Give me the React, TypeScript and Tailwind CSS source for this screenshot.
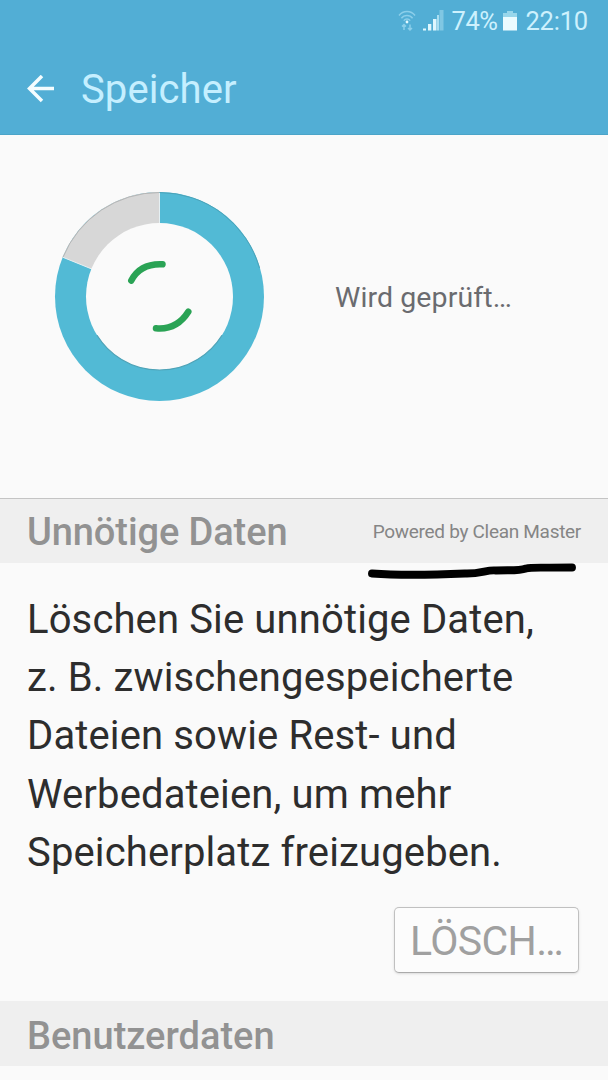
import React from 'react';

const StatusBar: React.FC = () => (
  <div className="flex h-[42px] items-center justify-end pr-5 text-[25.5px] leading-none text-[#cdf1fd]">
    <svg className="mr-[7px]" width="18" height="22" viewBox="0 0 18 22" fill="none">
      <g stroke="#8ccfea" strokeWidth="1.5">
        <path d="M1 5.5C5 .2 13 .2 17 5.5" />
        <path d="M3.4 8.2C6.2 4.6 11.8 4.6 14.6 8.2" />
        <path d="M5.8 10.6C7.4 8.6 10.6 8.6 12.2 10.6" />
        <path d="M6 20v-5M4 16.5l2-2 2 2M12 14.5v5M10 18l2 2 2-2" />
      </g>
      <circle cx="9" cy="12" r="1.4" fill="#e6faff" />
    </svg>
    <svg className="mr-[7px]" width="21" height="22" viewBox="0 0 21 22" fill="#dff7fe">
      <rect x="0" y="18.5" width="3" height="2" />
      <rect x="5" y="14" width="3.3" height="6.5" />
      <rect x="10" y="9" width="3.5" height="11.5" />
      <rect x="14" y="5" width="2" height="15.5" fill="#aadff2" />
      <rect x="16.5" y="0" width="4" height="20.5" fill="#80c7e3" />
    </svg>
    <span className="w-[46px] whitespace-nowrap pt-[2px] tracking-[-0.4px]">74%</span>
    <svg className="ml-[6px] mr-[8px]" width="14" height="22" viewBox="0 0 14 22">
      <path d="M4 1h6v2h4v4H0V3h4z" fill="#98d6eb" />
      <path d="M0 7h14v13.5H0z" fill="#ebfbff" />
    </svg>
    <span className="pt-[2px] tracking-[-0.2px]">22:10</span>
  </div>
);

const StorageRing: React.FC = () => (
  <svg width="212" height="212" viewBox="0 0 212 212" fill="none">
    <circle cx="105.5" cy="105.5" r="104.5" fill="#52bad5" />
    <path d="M105.5 105.5V1A104.5 104.5 0 0 0 8.7 66.2z" fill="#d7d7d7" />
    <path d="M105.5 105.5V1M105.5 105.5L8.7 66.2" stroke="#e6f0f3" strokeWidth="1" />
    <path d="M9 66.2A104 104 0 0 1 105.5 1.5" stroke="#b5b5b5" strokeWidth="1" />
    <path d="M105.5 1.5A104 104 0 0 1 205.5 77" stroke="#4aa3b9" strokeWidth="1" />
    <circle cx="105.5" cy="105.5" r="73.5" fill="#fafafa" />
    <path d="M43 144.2A73.5 73.5 0 0 0 168 144.2" stroke="#4fa3b7" strokeWidth="1.2" />
    <g stroke="#2aa355" strokeWidth="6.5" strokeLinecap="round">
      <path d="M77.3 89.5C83 78.5 92.5 72.5 108.5 73.3" />
      <path d="M102 137.2C115.5 138.5 126.5 133 134.3 120.7" />
    </g>
  </svg>
);

const App: React.FC = () => {
  return (
    <div className="h-[1080px] w-[608px] overflow-hidden bg-[#fafafa] font-[Roboto,sans-serif]">
      <header className="h-[135px] border-b border-[#4ba4c8] bg-[#52aed5]">
        <StatusBar />
        <div className="flex h-[93px] items-center pl-[27px]">
          <svg width="27" height="28" viewBox="0 0 27 28" fill="none" stroke="#f4fdff" strokeWidth="3.5">
            <path d="M15 1L2.5 13.5 15 26M2.5 13.5H27" />
          </svg>
          <h1 className="ml-[27px] pt-[2px] text-[40px] leading-none tracking-[0.1px] text-[#c5efff]">Speicher</h1>
        </div>
      </header>

      <section className="flex h-[363px] items-start pl-[54px] pt-[56px]">
        <StorageRing />
        <p className="ml-[69px] mt-[92px] text-[28.5px] leading-[30px] tracking-[0.1px] text-[#6a6b6f]">Wird geprüft…</p>
      </section>

      <div className="relative flex h-[65px] items-center justify-between border-t border-[#c4c4c4] bg-[#efefef] pl-[27px] pr-[27px]">
        <h2 className="pt-[2px] text-[38px] font-medium leading-none tracking-[-0.1px] text-[#929292]">Unnötige Daten</h2>
        <span className="text-[19px] leading-none tracking-[-0.3px] text-[#858585]">Powered by Clean Master</span>
        <svg className="absolute left-[366px] top-[62px]" width="212" height="20" viewBox="0 0 212 20" fill="none">
          <path
            d="M6 12.5C26 14 65 14 99 12.5C115 13 121 8.5 130 9.5C145 9 153 10 160 7.5C166 6 169 7 206 6.5"
            stroke="#000"
            strokeWidth="7.9"
            strokeLinecap="round"
          />
        </svg>
      </div>

      <section className="h-[438px] pl-[27px] pr-[29px] pt-[28px]">
        <p className="whitespace-nowrap text-[40px] leading-[58.2px] tracking-[0.13px] text-[#2d2d2d]">
          Löschen Sie unnötige Daten,
          <br />
          z. B. zwischengespeicherte
          <br />
          Dateien sowie Rest- und
          <br />
          Werbedateien, um mehr
          <br />
          Speicherplatz freizugeben.
        </p>
        <div className="mt-[25px] flex justify-end">
          <button className="h-[66px] w-[185px] rounded-[5px] border border-[#c0c0c0] border-b-[#aaa] bg-[#fcfcfc] pt-[3px] text-[41px] leading-none tracking-[-0.6px] text-[#a0a0a0] shadow-sm">
            LÖSCH…
          </button>
        </div>
      </section>

      <div className="flex h-[65px] items-center bg-[#efefef] pl-[27px] pt-[5px]">
        <h2 className="text-[38px] font-medium leading-none text-[#929292]">Benutzerdaten</h2>
      </div>
    </div>
  );
};

export default App;
